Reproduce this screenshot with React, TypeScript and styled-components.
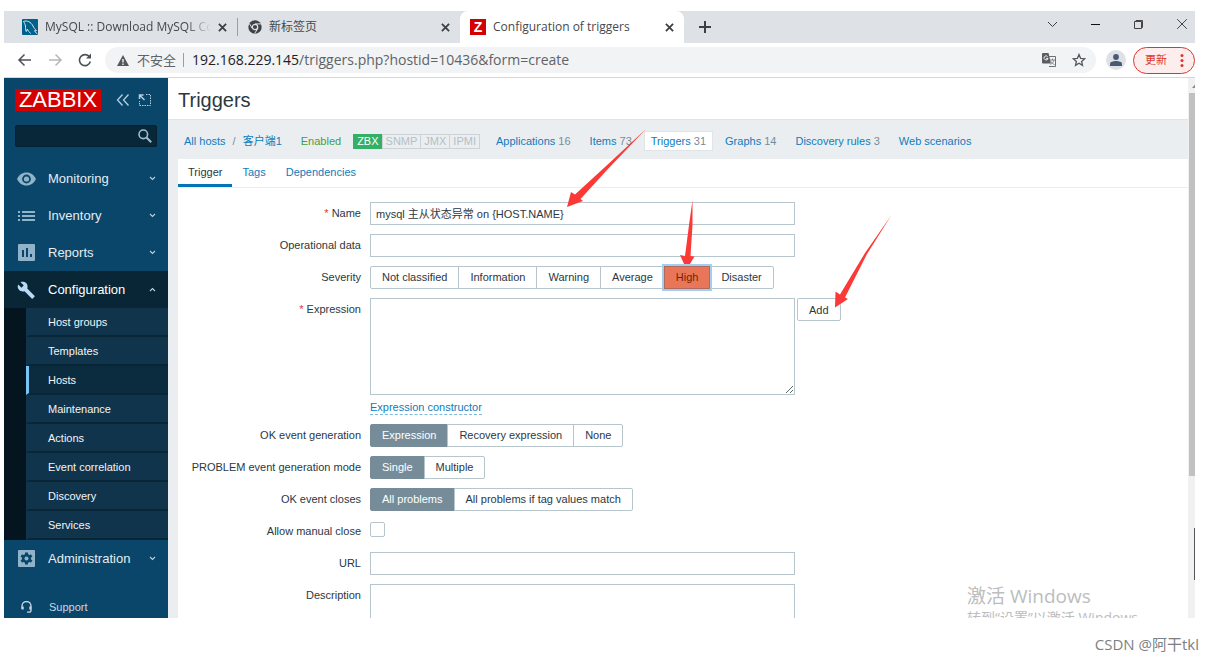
import React from "react";
import styled, { createGlobalStyle, css } from "styled-components";

const sans = `"Liberation Sans", Arial, "Noto Sans CJK SC", sans-serif`;
const ui = `"Open Sans", "Noto Sans", "Noto Sans CJK SC", sans-serif`;

const GlobalStyle = createGlobalStyle`
  *, *::before, *::after { box-sizing: border-box; }
  body { margin: 0; background: #fff; color: #2b383f; font: 11px/16px ${sans}; }
  button, input, textarea { font: inherit; color: inherit; margin: 0; }
  button { cursor: pointer; }
  a { color: #0f7cbc; text-decoration: none; }
  ul { list-style: none; margin: 0; padding: 0; }
  svg { display: block; flex: none; }
`;

const Page = styled.div`
  position: relative;
  height: 100vh;
  padding: 11px 18px 42px 4px;
`;
const Browser = styled.div`
  position: relative;
  display: flex;
  flex-direction: column;
  height: 100%;
  overflow: hidden;
`;

/* Browser chrome */
const TabStrip = styled.div`
  display: flex;
  flex: none;
  height: 32px;
  background: #dee1e6;
  font: 12px/18px ${ui};
  color: #45494d;
`;
const IconButton = styled.button`
  display: flex;
  align-items: center;
  justify-content: center;
  flex: none;
  padding: 0;
  border: 0;
  background: none;
  color: #3c4043;
`;
const Tab = styled.div<{ $active?: boolean; $width: number }>`
  display: flex;
  align-items: center;
  gap: 7px;
  width: ${(p) => p.$width}px;
  padding: 0 10px;
  ${(p) => p.$active && css`
    border-radius: 8px 8px 0 0;
    background: #fff;
  `}
`;
const TabTitle = styled.span<{ $fade?: boolean }>`
  flex: 1;
  min-width: 0;
  overflow: hidden;
  white-space: nowrap;
  ${(p) => p.$fade && css`
    mask-image: linear-gradient(90deg, #000 85%, transparent);
  `}
`;
const TabDivider = styled.span`
  align-self: center;
  width: 1px;
  height: 18px;
  background: #9a9da1;
`;
const ZFavicon = styled.span`
  width: 16px;
  height: 16px;
  background: #d40000;
  color: #fff;
  font: bold 14px/16px ${sans};
  text-align: center;
`;
const WindowControls = styled.div`
  display: flex;
  gap: 16px;
  height: 26px;
  margin-left: auto;
`;
const WindowButton = styled(IconButton)`
  width: 27px;
`;
const Toolbar = styled.div`
  display: flex;
  align-items: center;
  flex: none;
  height: 35px;
  padding-left: 13px;
  border-bottom: 1px solid #d5d8db;
`;
const NavButtons = styled.div`
  display: flex;
  gap: 14px;
`;
const AddressBar = styled.div`
  display: flex;
  align-items: center;
  flex: 1;
  height: 26px;
  margin: 0 10px 0 12px;
  padding: 0 10px 0 12px;
  border-radius: 13px;
  background: #f1f3f4;
  color: #5f6368;
  font: 13px/20px ${ui};
`;
const Insecure = styled.span`
  margin-left: 8px;
  padding-right: 7px;
  border-right: 1px solid #9a9da1;
  line-height: 14px;
`;
const Url = styled.span`
  flex: 1;
  margin-left: 8px;
  font-size: 14px;
  white-space: nowrap;
`;
const Host = styled.span`
  color: #202124;
`;
const AddressActions = styled.div`
  display: flex;
  gap: 16px;
`;
const Avatar = styled(IconButton)`
  width: 20px;
  height: 20px;
  border-radius: 50%;
  background: #dee1e6;
`;
const UpdateButton = styled.button`
  display: flex;
  align-items: center;
  gap: 8px;
  height: 27px;
  margin-left: 7px;
  padding: 0 9px 0 11px;
  border: 1px solid #d9362e;
  border-radius: 14px;
  background: #fdeeed;
  color: #d9362e;
  font-size: 11px;
`;

/* Zabbix sidebar */
const Content = styled.div`
  display: flex;
  flex: 1;
  min-height: 0;
`;
const Sidebar = styled.aside`
  flex: none;
  width: 164px;
  background: #0a466a;
  color: #e6ecf0;
`;
const Brand = styled.div`
  display: flex;
  align-items: center;
  height: 22px;
  margin: 11px 11px 14px;
`;
const Logo = styled.a`
  flex: none;
  width: 86px;
  margin-right: 15px;
  background: #d40000;
  color: #fff;
  font-size: 22px;
  line-height: 22px;
  text-align: center;
`;
const BrandButton = styled(IconButton)`
  margin-right: 8px;
  color: #b4cfe0;
`;
const Search = styled.form`
  display: flex;
  align-items: center;
  height: 22px;
  margin: 0 11px 13px;
  padding-right: 4px;
  border: 1px solid #05202f;
  border-radius: 2px;
  background: #082839;
`;
const SearchInput = styled.input`
  flex: 1;
  min-width: 0;
  padding: 0 6px;
  border: 0;
  outline: 0;
  background: none;
`;
const MenuLink = styled.a<{ $open?: boolean }>`
  display: flex;
  align-items: center;
  height: 37px;
  padding: 0 12px 0 13px;
  background: ${(p) => (p.$open ? "#082636" : "transparent")};
  color: ${(p) => (p.$open ? "#fff" : "#e6ecf0")};
  font-size: 13px;
`;
const MenuIcon = styled.span<{ $open?: boolean }>`
  width: 31px;
  color: ${(p) => (p.$open ? "#b9dcf4" : "#90b3c9")};
`;
const MenuText = styled.span`
  flex: 1;
`;
const Submenu = styled.ul`
  padding-left: 22px;
  background: #04151f;
`;
const SubmenuLink = styled.a<{ $current?: boolean }>`
  display: block;
  height: 29px;
  padding-left: 19px;
  border-left: 3px solid ${(p) => (p.$current ? "#79c3f5" : "#10344c")};
  border-bottom: 2px solid #092637;
  background: ${(p) => (p.$current ? "#0b2b3e" : "#10344c")};
  color: #f2f5f7;
  line-height: 28px;
`;
const SupportLink = styled.a`
  display: flex;
  align-items: center;
  gap: 17px;
  height: 26px;
  margin-top: 17px;
  padding-left: 17px;
  color: #c9d7e0;
`;

/* Zabbix page */
const Main = styled.main`
  display: flex;
  flex-direction: column;
  flex: 1;
  min-width: 0;
  background: #ebeef0;
`;
const PageHeader = styled.header`
  flex: none;
  height: 42px;
  padding-left: 10px;
  border-bottom: 1px solid #dfe4e7;
  background: #fff;
`;
const PageTitle = styled.h1`
  margin: 0;
  font-size: 20px;
  font-weight: 400;
  line-height: 44px;
`;
const ObjectNav = styled.nav`
  display: flex;
  align-items: center;
  flex: none;
  gap: 7px;
  height: 39px;
  padding: 3px 0 0 10px;
  white-space: nowrap;
`;
const Breadcrumb = styled.span`
  display: flex;
  gap: 1px;
  color: #768d99;
`;
const NavItem = styled.span<{ $current?: boolean }>`
  padding: 1px 6px;
  background: ${(p) => (p.$current ? "#fff" : "transparent")};
  box-shadow: ${(p) => (p.$current ? "0 0 0 1px #dfe4e7" : "none")};
  color: #768d99;
  line-height: 16px;
`;
const Slash = styled.span`
  padding: 1px 0;
`;
const Enabled = styled.a`
  color: #429e47;
`;
const Badges = styled.span`
  display: flex;
  margin-right: 3px;
`;
const Badge = styled.span<{ $on?: boolean }>`
  padding: 0 3px;
  border: 1px solid ${(p) => (p.$on ? "#34af67" : "#ccd2d5")};
  margin-left: -1px;
  background: ${(p) => (p.$on ? "#34af67" : "transparent")};
  color: ${(p) => (p.$on ? "#fff" : "#b3bfc5")};
  line-height: 13px;
`;
const FormPanel = styled.div`
  flex: 1;
  min-height: 0;
  margin-left: 10px;
  overflow: hidden;
  background: #fff;
`;
const FormTabs = styled.div`
  display: flex;
  height: 29px;
  border-bottom: 1px solid #ebeef0;
`;
const FormTab = styled.button<{ $current?: boolean }>`
  padding: 0 10px;
  border: 0;
  border-bottom: 3px solid ${(p) => (p.$current ? "#0275b8" : "transparent")};
  background: none;
  color: ${(p) => (p.$current ? "#2b383f" : "#0f7cbc")};
`;
const Form = styled.form`
  display: flex;
  flex-direction: column;
  gap: 9px;
  padding-top: 14px;
`;
const Row = styled.div`
  display: grid;
  grid-template-columns: 183px minmax(0, 1fr);
  column-gap: 9px;
  min-height: 23px;
`;
const RowLabel = styled.label`
  line-height: 23px;
  text-align: right;
  white-space: nowrap;
`;
const Required = styled.span`
  color: #e33734;
`;
const fieldBox = css`
  display: block;
  width: 100%;
  max-width: 425px;
  border: 1px solid #b6c6cc;
  border-radius: 0;
  outline: 0;
  background: #fff;
`;
const TextField = styled.input`
  ${fieldBox}
  height: 23px;
  padding: 0 5px 2px;
`;
const TextArea = styled.textarea`
  ${fieldBox}
  height: 97px;
  padding: 4px 5px;
  resize: vertical;
`;
const FieldLine = styled.div`
  display: flex;
  align-items: flex-start;
  gap: 2px;
`;
const PlainButton = styled.button`
  height: 23px;
  padding: 0 11px;
  border: 1px solid #b6c6cc;
  border-radius: 2px;
  background: #fff;
`;
const DashedButton = styled.button`
  height: 16px;
  margin-top: 4px;
  padding: 0;
  border: 0;
  border-bottom: 1px dashed #7fb9dc;
  background: none;
  color: #0f7cbc;
  line-height: 14px;
`;
const FieldStack = styled.div`
  display: flex;
  flex-direction: column;
  align-items: flex-start;

  ${FieldLine} { width: 100%; }
`;
const Segments = styled.div`
  display: flex;
  height: 23px;
`;
const Segment = styled.label<{ $severity?: boolean }>`
  position: relative;
  padding: 0 11px;
  border: 1px solid #b6c6cc;
  line-height: 21px;
  white-space: nowrap;
  & + & { margin-left: -1px; }
  &:first-child { border-radius: 2px 0 0 2px; }
  &:last-child { border-radius: 0 2px 2px 0; }
  &:has(input:checked) {
    border-color: #768d99;
    background: #768d99;
    color: #fff;
    ${(p) => p.$severity && css`
      z-index: 1;
      border-color: #b0695a;
      background: #e97659;
      color: #732501;
      box-shadow: 0 0 0 2px #a5cdf0;
    `}
  }
`;
const SegmentRadio = styled.input`
  position: absolute;
  inset: 0;
  width: 100%;
  height: 100%;
  opacity: 0;
`;
const Checkbox = styled.input`
  width: 15px;
  height: 15px;
  margin-top: 2px;
  border: 1px solid #b6c6cc;
  border-radius: 2px;
  appearance: none;
`;
const ScrollTrack = styled.div`
  display: flex;
  flex-direction: column;
  flex: none;
  width: 7px;
  padding-left: 1px;
  background: #f1f1f1;
  overflow: hidden;
`;
const ScrollArrow = styled.svg`
  margin: 6px 0 5px 3px;
`;
const ScrollThumb = styled.div`
  flex: 0 0 71%;
  background: #c1c1c1;
`;

/* Overlays */
const Arrows = styled.svg`
  position: absolute;
  top: 0;
  left: 0;
  pointer-events: none;
`;
const Activation = styled.div`
  position: absolute;
  right: 43px;
  bottom: -10px;
  color: #bbbdbe;
  font: 14px/20px ${ui};
  white-space: nowrap;
`;
const ActivationTitle = styled.div`
  font-size: 19px;
  line-height: 24px;
`;
const EdgeHandle = styled.div`
  position: absolute;
  right: 0;
  bottom: 38px;
  width: 1px;
  height: 52px;
  background: #54545c;
`;
const Watermark = styled.div`
  position: absolute;
  right: 14px;
  bottom: 6px;
  color: #7d7f82;
  font: 15px/20px ${ui};
`;

const Cross = ({ size = 9, width = 2 }: { size?: number; width?: number }) => (
  <svg width={size} height={size} viewBox="0 0 10 10" stroke="currentColor" strokeWidth={width} fill="none">
    <path d="M1 1l8 8M9 1l-8 8" />
  </svg>
);

const Chevron = ({ up }: { up?: boolean }) => (
  <svg width="7" height="5" viewBox="0 0 7 5" fill="none" stroke="#b9d0de" strokeWidth="1.1">
    <path d={up ? "M1 4l2.500-2.500L6 4" : "M1 1l2.500 2.500L6 1"} />
  </svg>
);

const icons: Record<string, React.ReactNode> = {
  Monitoring: (
    <svg width="19" height="14" viewBox="0 0 19 14">
      <path fill="currentColor" fillRule="evenodd" d="M9.500.5C5.200.5 1.600 3.200 0 7c1.600 3.800 5.200 6.500 9.500 6.500S17.400 10.800 19 7C17.400 3.200 13.800.5 9.500.5zm0 10.900a4.400 4.400 0 1 1 0-8.800 4.400 4.400 0 0 1 0 8.800zm0-1.800a2.600 2.600 0 1 0 0-5.200 2.600 2.600 0 0 0 0 5.200z" />
    </svg>
  ),
  Inventory: (
    <svg width="19" height="12" viewBox="0 0 19 12" fill="currentColor">
      <path d="M1 1h2v2H1zM5 1h13v2H5zM1 5h2v2H1zM5 5h13v2H5zM1 9h2v2H1zM5 9h13v2H5z" />
    </svg>
  ),
  Reports: (
    <svg width="19" height="17" viewBox="0 0 19 17">
      <path fill="currentColor" fillRule="evenodd" d="M2 0h15a1 1 0 0 1 1 1v15a1 1 0 0 1-1 1H2a1 1 0 0 1-1-1V1a1 1 0 0 1 1-1zm3 6v7h2V6zm4-2v9h2V4zm4 6v3h2v-3z" />
    </svg>
  ),
  Configuration: (
    <svg width="18" height="18" viewBox="0 0 24 24">
      <path fill="currentColor" d="M23.300 19.500L13.700 9.900c.9-2.400.4-5.200-1.500-7.100C10.100.8 7.100.4 4.700 1.500L9 5.800 6 8.900 1.600 4.600C.4 7 .9 10 2.900 12.100c1.900 1.900 4.700 2.400 7.100 1.500l9.600 9.600c.4.400 1 .4 1.400 0l2.300-2.300c.5-.4.5-1.100 0-1.400z" />
    </svg>
  ),
  Administration: (
    <svg width="19" height="17" viewBox="0 0 19 17">
      <rect x="1" width="17" height="17" rx="1" fill="currentColor" />
      <g transform="translate(9.500 8.500)" fill="#0a466a">
        <circle r="4.500" />
        {[0, 60, 120].map((a) => (
          <rect key={a} x="-1.500" y="-6" width="3" height="12" transform={`rotate(${a})`} />
        ))}
        <circle r="2" fill="#90b3c9" />
      </g>
    </svg>
  ),
};

const submenu = ["Host groups", "Templates", "Hosts", "Maintenance", "Actions", "Event correlation", "Discovery", "Services"];
const objectLinks: [string, string][] = [
  ["Applications", "16"],
  ["Items", "73"],
  ["Triggers", "31"],
  ["Graphs", "14"],
  ["Discovery rules", "3"],
  ["Web scenarios", ""],
];

function MenuItem({ name, open }: { name: string; open?: boolean }) {
  return (
    <MenuLink href="#" $open={open} aria-expanded={!!open}>
      <MenuIcon $open={open}>{icons[name]}</MenuIcon>
      <MenuText>{name}</MenuText>
      <Chevron up={open} />
    </MenuLink>
  );
}

function SegmentRow({ label, name, options, selected, severity }: {
  label: string; name: string; options: string[]; selected: string; severity?: boolean;
}) {
  return (
    <Row>
      <RowLabel as="span" id={`${name}-label`}>{label}</RowLabel>
      <Segments role="radiogroup" aria-labelledby={`${name}-label`}>
        {options.map((o) => (
          <Segment key={o} $severity={severity}>
            <SegmentRadio type="radio" name={name} defaultChecked={o === selected} />
            {o}
          </Segment>
        ))}
      </Segments>
    </Row>
  );
}

function BrowserChrome() {
  return (
    <>
      <TabStrip>
        <Tab $width={233}>
          <svg width="24" height="16" viewBox="0 0 24 16">
            <rect x="8" width="16" height="16" rx="1" fill="#00618a" />
            <path d="M9.500 2.500c3.500-1.500 7.500.5 9.500 4.500 1 2 1.500 3 3.500 4.500l-2 .3 2.500 3M9.500 2.500c1 1.500 1.500 2.500 2 4.500.3 1.500-.5 3 .8 5.500.6-1 .7-1.500 1-2.500 1 2 2 3.500 3.500 4.500" fill="none" stroke="#dbe9f0" />
          </svg>
          <TabTitle $fade>MySQL :: Download MySQL Community</TabTitle>
          <IconButton aria-label="Close tab"><Cross /></IconButton>
        </Tab>
        <TabDivider />
        <Tab $width={222}>
          <svg width="14" height="14" viewBox="0 0 14 14">
            <circle cx="7" cy="7" r="6.700" fill="#3f4347" />
            <circle cx="7" cy="7" r="2.700" fill="#3f4347" stroke="#dee1e6" strokeWidth="1.300" />
            <path d="M7 3.900h6M4.300 8.500L1.300 3.400M9.700 8.500L6.700 13.600" stroke="#dee1e6" />
          </svg>
          <TabTitle>新标签页</TabTitle>
          <IconButton aria-label="Close tab"><Cross /></IconButton>
        </Tab>
        <Tab $active $width={224}>
          <ZFavicon>Z</ZFavicon>
          <TabTitle>Configuration of triggers</TabTitle>
          <IconButton aria-label="Close tab"><Cross /></IconButton>
        </Tab>
        <IconButton aria-label="New tab">
          <svg width="42" height="12" viewBox="0 0 42 12" stroke="currentColor" strokeWidth="2">
            <path d="M15 6h12M21 0v12" />
          </svg>
        </IconButton>
        <WindowControls>
          <WindowButton aria-label="Search tabs">
            <svg width="11" height="7" viewBox="0 0 11 7" fill="none" stroke="currentColor"><path d="M1 1l4.500 4.500L10 1" /></svg>
          </WindowButton>
          <WindowButton aria-label="Minimize">
            <svg width="9" height="2" viewBox="0 0 9 2"><path d="M0 1h9v1H0z" fill="#111" /></svg>
          </WindowButton>
          <WindowButton aria-label="Restore">
            <svg width="11" height="11" viewBox="0 0 11 11" fill="none" stroke="#444"><path d="M1.500 2.500h7v7h-7zM3 2.500v-1h6.500v7H8.500" /></svg>
          </WindowButton>
          <WindowButton aria-label="Close"><Cross size={12} width={0.8} /></WindowButton>
        </WindowControls>
      </TabStrip>
      <Toolbar>
        <NavButtons>
          <IconButton aria-label="Back">
            <svg width="16" height="14" viewBox="0 0 16 14" fill="none" stroke="#4d5156" strokeWidth="1.500"><path d="M14 7H2M7.500 1.500L2 7l5.500 5.500" /></svg>
          </IconButton>
          <IconButton aria-label="Forward">
            <svg width="16" height="14" viewBox="0 0 16 14" fill="none" stroke="#b4b7ba" strokeWidth="1.500"><path d="M2 7h12M8.500 1.500L14 7l-5.500 5.500" /></svg>
          </IconButton>
          <IconButton aria-label="Reload">
            <svg width="16" height="14" viewBox="0 0 16 14" fill="none" stroke="#4d5156" strokeWidth="1.600">
              <path d="M12.500 4A5.500 5.500 0 1 0 13.300 8.500" />
              <path d="M14 .5v5H9z" fill="#4d5156" stroke="none" />
            </svg>
          </IconButton>
        </NavButtons>
        <AddressBar>
          <svg width="12" height="11" viewBox="0 0 12 11">
            <path fill="#54585c" fillRule="evenodd" d="M6 0l6 11H0zM5.300 4v3.500h1.400V4zm0 4.500V10h1.400V8.500z" />
          </svg>
          <Insecure>不安全</Insecure>
          <Url><Host>192.168.229.145</Host>/triggers.php?hostid=10436&amp;form=create</Url>
          <AddressActions>
            <IconButton aria-label="Translate">
              <svg width="14" height="14" viewBox="0 0 14 14">
                <path d="M6 3.500h7.500v10H7" fill="#f1f3f4" stroke="#6b6f73" />
                <path d="M8 7h5M10.500 5.500V7M12 7c-.5 2-2 3.500-3.500 4.500M9 8.500c.8 1.500 2 2.500 3.500 3" fill="none" stroke="#6b6f73" strokeWidth=".8" />
                <path d="M1 0h5.500L9 10.500H1a1 1 0 0 1-1-1V1a1 1 0 0 1 1-1z" fill="#5a5e62" />
                <path d="M5.700 3.800A2 2 0 1 0 6 5.400H4.200" fill="none" stroke="#f1f3f4" />
              </svg>
            </IconButton>
            <IconButton aria-label="Bookmark">
              <svg width="14" height="14" viewBox="0 0 14 14" fill="none" stroke="#54585c" strokeWidth="1.300">
                <path d="M7 1.500l1.600 3.800 4.100.4-3.100 2.700.9 4L7 10.300l-3.500 2.100.9-4L1.300 5.700l4.100-.4z" />
              </svg>
            </IconButton>
          </AddressActions>
        </AddressBar>
        <Avatar aria-label="Profile">
          <svg width="12" height="12" viewBox="0 0 12 12" fill="#4a5a75"><circle cx="6" cy="3" r="2.900" /><path d="M0 12V9.800C0 8 3 7 6 7s6 1 6 2.800V12z" /></svg>
        </Avatar>
        <UpdateButton>
          更新
          <svg width="10" height="13" viewBox="0 0 10 13" fill="currentColor"><circle cx="7" cy="1.500" r="1.500" /><circle cx="7" cy="6.500" r="1.500" /><circle cx="7" cy="11.500" r="1.500" /></svg>
        </UpdateButton>
      </Toolbar>
    </>
  );
}

export default function App() {
  return (
    <Page>
      <GlobalStyle />
      <Browser>
        <BrowserChrome />
        <Content>
          <Sidebar>
            <Brand>
              <Logo href="#">ZABBIX</Logo>
              <BrandButton aria-label="Collapse sidebar">
                <svg width="14" height="12" viewBox="0 0 14 12" fill="none" stroke="currentColor" strokeWidth="1.300"><path d="M6.500.5L1.500 6l5 5.500M12.500.5L7.500 6l5 5.500" /></svg>
              </BrandButton>
              <BrandButton aria-label="Hide sidebar">
                <svg width="13" height="12" viewBox="0 0 13 12" fill="none" stroke="currentColor">
                  <path d="M8 .5h4.500v11H1.500V7" strokeDasharray="1.500 1" />
                  <path d="M1.500 5V1h4M1.500 1l5 5" strokeWidth="1.500" />
                </svg>
              </BrandButton>
            </Brand>
            <Search>
              <SearchInput type="text" aria-label="Search" />
              <IconButton type="button" aria-label="Search">
                <svg width="14" height="14" viewBox="0 0 14 14" fill="none" stroke="#9fbccd" strokeWidth="1.600"><circle cx="5.300" cy="5.300" r="4.300" /><path d="M8.500 8.500l4.700 4.700" strokeWidth="2" /></svg>
              </IconButton>
            </Search>
            <nav>
              <MenuItem name="Monitoring" />
              <MenuItem name="Inventory" />
              <MenuItem name="Reports" />
              <MenuItem name="Configuration" open />
              <Submenu>
                {submenu.map((s) => (
                  <li key={s}><SubmenuLink href="#" $current={s === "Hosts"}>{s}</SubmenuLink></li>
                ))}
              </Submenu>
              <MenuItem name="Administration" />
              <SupportLink href="#">
                <svg width="11" height="12" viewBox="0 0 11 12" fill="none" stroke="currentColor" strokeWidth="1.300">
                  <path d="M1 8V5a4.500 4.500 0 0 1 9 0v4.500c0 1-.8 1.700-2 1.700H6" />
                  <path d="M1.700 5.500v3M9.300 5.500v3" strokeWidth="2" />
                </svg>
                Support
              </SupportLink>
            </nav>
          </Sidebar>
          <Main>
            <PageHeader><PageTitle>Triggers</PageTitle></PageHeader>
            <ObjectNav>
              <Breadcrumb>
                <NavItem><a href="#">All hosts</a></NavItem>
                <Slash>/</Slash>
                <NavItem><a href="#">客户端1</a></NavItem>
              </Breadcrumb>
              <NavItem><Enabled href="#">Enabled</Enabled></NavItem>
              <Badges>
                <Badge $on>ZBX</Badge><Badge>SNMP</Badge><Badge>JMX</Badge><Badge>IPMI</Badge>
              </Badges>
              {objectLinks.map(([name, count]) => (
                <NavItem key={name} $current={name === "Triggers"}><a href="#">{name}</a> {count}</NavItem>
              ))}
            </ObjectNav>
            <FormPanel>
              <FormTabs role="tablist">
                <FormTab role="tab" $current>Trigger</FormTab>
                <FormTab role="tab">Tags</FormTab>
                <FormTab role="tab">Dependencies</FormTab>
              </FormTabs>
              <Form>
                <Row>
                  <RowLabel htmlFor="name"><Required>*</Required> Name</RowLabel>
                  <TextField id="name" defaultValue="mysql 主从状态异常 on {HOST.NAME}" />
                </Row>
                <Row>
                  <RowLabel htmlFor="opdata">Operational data</RowLabel>
                  <TextField id="opdata" />
                </Row>
                <SegmentRow label="Severity" name="severity" severity selected="High"
                  options={["Not classified", "Information", "Warning", "Average", "High", "Disaster"]} />
                <Row>
                  <RowLabel htmlFor="expression"><Required>*</Required> Expression</RowLabel>
                  <FieldStack>
                    <FieldLine>
                      <TextArea id="expression" />
                      <PlainButton type="button">Add</PlainButton>
                    </FieldLine>
                    <DashedButton type="button">Expression constructor</DashedButton>
                  </FieldStack>
                </Row>
                <SegmentRow label="OK event generation" name="recovery" selected="Expression"
                  options={["Expression", "Recovery expression", "None"]} />
                <SegmentRow label="PROBLEM event generation mode" name="mode" selected="Single"
                  options={["Single", "Multiple"]} />
                <SegmentRow label="OK event closes" name="closes" selected="All problems"
                  options={["All problems", "All problems if tag values match"]} />
                <Row>
                  <RowLabel htmlFor="manual">Allow manual close</RowLabel>
                  <Checkbox id="manual" type="checkbox" />
                </Row>
                <Row>
                  <RowLabel htmlFor="url">URL</RowLabel>
                  <TextField id="url" />
                </Row>
                <Row>
                  <RowLabel htmlFor="description">Description</RowLabel>
                  <TextArea id="description" />
                </Row>
              </Form>
            </FormPanel>
          </Main>
          <ScrollTrack>
            <ScrollArrow width="6" height="4" viewBox="0 0 6 4"><path d="M0 4l3.500-4L7 4z" fill="#8b8b8b" /></ScrollArrow>
            <ScrollThumb />
          </ScrollTrack>
        </Content>
        <Activation>
          <ActivationTitle>激活 Windows</ActivationTitle>
          转到“设置”以激活 Windows。
        </Activation>
        <EdgeHandle />
      </Browser>
      <Arrows width="900" height="320" viewBox="0 0 900 320" fill="#fb3a37">
        <path d="M646 129L605 167L575 194.500L571 192L567 207L583 201L580.500 199L607 170z" />
        <path d="M692.500 200L689 225L685 256L680 255L686.500 269.500L694.500 256.500L690.500 256L692.500 225z" />
        <path d="M891.500 215L865 253L840 294.500L835.500 291.500L835 307.500L848 299L845 297.500L867 254z" />
      </Arrows>
      <Watermark>CSDN @阿干tkl</Watermark>
    </Page>
  );
}
